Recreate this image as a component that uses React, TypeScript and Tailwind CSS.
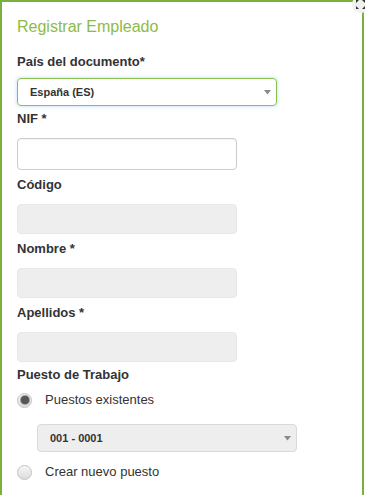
import React from 'react';

const font = { fontFamily: '"Liberation Sans", Arial, Helvetica, sans-serif' };

const Label = ({ children, className = '' }: { children: React.ReactNode; className?: string }) => (
  <div className={`h-[20px] text-[13px] leading-[20px] font-bold text-[#333] ${className}`}>{children}</div>
);

const Caret = () => (
  <svg width="7" height="5" viewBox="0 0 7 5" className="shrink-0">
    <path d="M0 0 L7 0 L3.5 4.5 Z" fill="#8a8a8a" />
  </svg>
);

const Radio = ({ checked }: { checked?: boolean }) => (
  <span className="w-[15px] h-[15px] rounded-full border border-[#c2c2c2] bg-gradient-to-b from-[#f7f7f7] to-[#dcdcdc] flex items-center justify-center shrink-0">
    {checked && <span className="w-[8px] h-[8px] rounded-full bg-[#555] ring-1 ring-[#9a9a9a]" />}
  </span>
);

const ResizeIcon = () => (
  <div className="absolute left-[352px] top-[-4px] w-[17px] h-[17px] rounded-full bg-[#f1f1f1] flex items-center justify-center">
    <svg width="11" height="11" viewBox="0 0 11 11">
      <path d="M1 1 L4 1 L1 4 Z" fill="#333" />
      <path d="M10 1 L7 1 L10 4 Z" fill="#333" />
      <path d="M1 10 L4 10 L1 7 Z" fill="#333" />
      <path d="M10 10 L7 10 L10 7 Z" fill="#333" />
    </svg>
  </div>
);

export default function App() {
  return (
    <div className="relative w-[365px] h-[495px] overflow-hidden bg-white" style={font}>
      <div className="w-[364px] min-h-[520px] border-2 border-[#7cb03c] px-[15px] pt-[14px]">
        <h2 className="h-[22px] text-[16px] leading-[22px] text-[#8cbb48] font-normal">Registrar Empleado</h2>

        <Label className="mt-[14px]">País del documento*</Label>
        <div className="mt-[6px] w-[260px] h-[28px] rounded-[4px] border border-[#8cc04c] shadow-[0_0_4px_rgba(102,175,233,0.45)] flex items-center justify-between pl-[12px] pr-[5px]">
          <span className="text-[11px] font-bold text-[#333]">España (ES)</span>
          <Caret />
        </div>

        <Label className="mt-[3px]">NIF *</Label>
        <div className="mt-[9px] w-[220px] h-[32px] rounded-[4px] border border-[#cccccc] bg-white shadow-[inset_0_1px_1px_rgba(0,0,0,0.05)]" />

        <Label className="mt-[5px]">Código</Label>
        <div className="mt-[9px] w-[220px] h-[30px] rounded-[4px] bg-[#eeeeee] border border-[#e8e8e8]" />

        <Label className="mt-[5px]">Nombre *</Label>
        <div className="mt-[9px] w-[220px] h-[30px] rounded-[4px] bg-[#eeeeee] border border-[#e8e8e8]" />

        <Label className="mt-[5px]">Apellidos *</Label>
        <div className="mt-[9px] w-[220px] h-[30px] rounded-[4px] bg-[#eeeeee] border border-[#e8e8e8]" />

        <Label className="mt-[3px]">Puesto de Trabajo</Label>
        <div className="mt-[5px] h-[20px] flex items-center">
          <Radio checked />
          <span className="ml-[13px] text-[13px] leading-[20px] text-[#333]">Puestos existentes</span>
        </div>
        <div className="mt-[14px] ml-[20px] w-[260px] h-[28px] rounded-[4px] border border-[#d9d9d9] bg-[#eeeeee] flex items-center justify-between pl-[12px] pr-[5px]">
          <span className="text-[11px] font-bold text-[#333]">001 - 0001</span>
          <Caret />
        </div>
        <div className="mt-[10px] h-[20px] flex items-center">
          <Radio />
          <span className="ml-[13px] text-[13px] leading-[20px] text-[#333]">Crear nuevo puesto</span>
        </div>
      </div>
      <ResizeIcon />
    </div>
  );
}
